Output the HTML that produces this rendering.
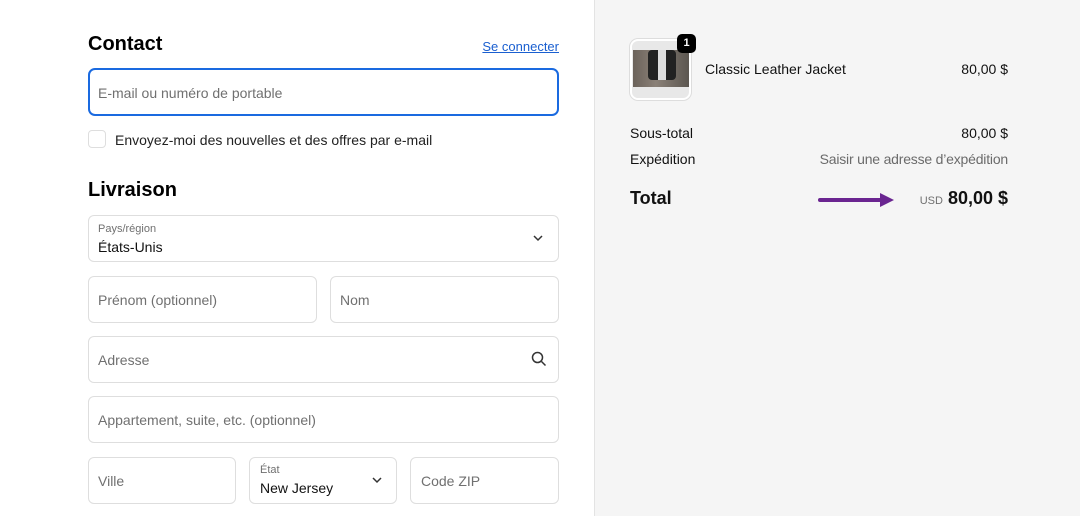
<!DOCTYPE html>
<html><head><meta charset="utf-8"><style>
*{box-sizing:border-box;margin:0;padding:0}
body{width:1080px;height:516px;overflow:hidden;background:#fff;font-family:"Liberation Sans",sans-serif;color:#111;position:relative}
.right{position:absolute;left:594px;top:0;width:486px;height:516px;background:#f5f5f5;border-left:1px solid #e3e3e3}
.abs{position:absolute}
.r{position:absolute;right:72px;text-align:right;white-space:nowrap}
.f{position:absolute;border:1px solid #dedede;border-radius:6px;background:#fff}
.ph{position:absolute;font-size:14px;color:#707070}
h2{position:absolute;font-size:20px;font-weight:bold;color:#000}
.t14{font-size:14px}
</style></head><body>
<h2 style="left:88px;top:33px">Contact</h2>
<div class="abs" style="right:521px;top:39px;font-size:13px;color:#1a5fd0;text-decoration:underline">Se connecter</div>
<div class="f" style="left:88px;top:68px;width:471px;height:48px;border:2px solid #1a6ae0;border-radius:7px"></div>
<div class="ph" style="left:98px;top:85px">E-mail ou numéro de portable</div>
<div class="f" style="left:88px;top:130px;width:18px;height:18px;border-radius:4px"></div>
<div class="abs t14" style="left:115px;top:132px;color:#222">Envoyez-moi des nouvelles et des offres par e-mail</div>
<h2 style="left:88px;top:179px">Livraison</h2>
<div class="f" style="left:88px;top:215px;width:471px;height:47px"></div>
<div class="abs" style="left:98px;top:223px;font-size:11px;color:#707070">Pays/région</div>
<div class="abs t14" style="left:98px;top:239px">États-Unis</div>
<svg class="abs" style="left:532px;top:233px" width="12" height="10"><path d="M2 3l4 4 4-4" stroke="#333" fill="none" stroke-width="1.5"/></svg>
<div class="f" style="left:88px;top:276px;width:229px;height:47px"></div>
<div class="ph" style="left:98px;top:292px">Prénom (optionnel)</div>
<div class="f" style="left:330px;top:276px;width:229px;height:47px"></div>
<div class="ph" style="left:340px;top:292px">Nom</div>
<div class="f" style="left:88px;top:336px;width:471px;height:47px"></div>
<div class="ph" style="left:98px;top:352px">Adresse</div>
<svg class="abs" style="left:531px;top:351px" width="16" height="16"><circle cx="6.5" cy="6.5" r="5" stroke="#333" stroke-width="1.5" fill="none"/><path d="M10.5 10.5l4 4" stroke="#333" stroke-width="1.5"/></svg>
<div class="f" style="left:88px;top:396px;width:471px;height:47px"></div>
<div class="ph" style="left:98px;top:412px">Appartement, suite, etc. (optionnel)</div>
<div class="f" style="left:88px;top:457px;width:148px;height:47px"></div>
<div class="ph" style="left:98px;top:473px">Ville</div>
<div class="f" style="left:249px;top:457px;width:148px;height:47px"></div>
<div class="abs" style="left:260px;top:464px;font-size:11px;color:#707070">État</div>
<div class="abs t14" style="left:260px;top:480px">New Jersey</div>
<svg class="abs" style="left:371px;top:475px" width="12" height="10"><path d="M2 3l4 4 4-4" stroke="#333" fill="none" stroke-width="1.5"/></svg>
<div class="f" style="left:410px;top:457px;width:149px;height:47px"></div>
<div class="ph" style="left:421px;top:473px">Code ZIP</div>
<div class="right"></div>
<div class="abs" style="left:630px;top:39px;width:61px;height:61px;border:2px solid #fff;border-radius:8px;background:#e8e8e8;overflow:hidden;box-shadow:0 0 0 1px #ddd">
<div style="position:absolute;left:1px;top:9px;width:57px;height:37px;background:linear-gradient(90deg,#6b625a,#8a8077 40%,#5a554f)"></div>
<div style="position:absolute;left:16px;top:9px;width:28px;height:30px;background:#222;border-radius:4px"></div>
<div style="position:absolute;left:26px;top:9px;width:8px;height:30px;background:#ddd"></div>
</div>
<div class="abs" style="left:677px;top:34px;width:19px;height:19px;background:#000;border-radius:5px;color:#fff;font-size:11px;font-weight:bold;text-align:center;line-height:19px">1</div>
<div class="abs t14" style="left:705px;top:61px">Classic Leather Jacket</div>
<div class="r t14" style="top:61px">80,00 $</div>
<div class="abs t14" style="left:630px;top:125px">Sous-total</div>
<div class="r t14" style="top:125px">80,00 $</div>
<div class="abs t14" style="left:630px;top:151px">Expédition</div>
<div class="r t14" style="top:151px;color:#6b6b6b;letter-spacing:-0.2px">Saisir une adresse d’expédition</div>
<div class="abs" style="left:630px;top:188px;font-size:18px;font-weight:bold">Total</div>
<svg class="abs" style="left:818px;top:191px" width="78" height="16"><path d="M2 9h62" stroke="#6a2590" stroke-width="4" stroke-linecap="round"/><path d="M62 2l14 7-14 7z" fill="#6a2590"/></svg>
<div class="r" style="top:188px;font-size:18px;font-weight:bold"><span style="font-size:11px;font-weight:normal;color:#707070;margin-right:5px">USD</span>80,00 $</div>
</body></html>
